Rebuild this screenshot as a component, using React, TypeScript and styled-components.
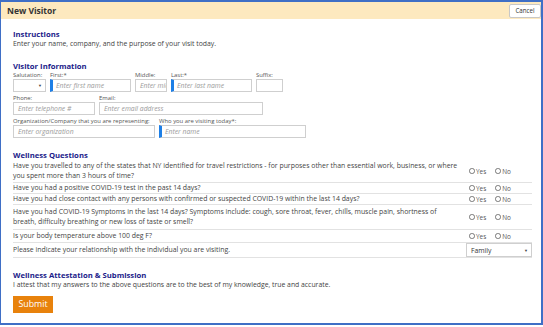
import React from "react"
import styled, { createGlobalStyle } from "styled-components"

const GlobalStyle = createGlobalStyle`
    html, body {
        margin: 0;
        padding: 0;
        background: #fff;
    }
    body {
        font-family: "Open Sans", "Noto Sans", sans-serif;
        color: #444;
    }
`

const Frame = styled.div`
    box-sizing: border-box;
    width: 543px;
    height: 325px;
    border: 2px solid #3f6fc6;
    border-left-width: 1.5px;
    display: flex;
    flex-direction: column;
`

const Header = styled.div`
    height: 17px;
    background: #fde9bf;
    display: flex;
    align-items: center;
    justify-content: space-between;
    padding: 0 0 0 6px;
`

const HeaderTitle = styled.div`
    font-size: 8.5px;
    font-weight: 700;
    color: #333;
`

const CancelButton = styled.button`
    box-sizing: border-box;
    height: 14px;
    width: 32px;
    padding: 0;
    background: #fff;
    border: 1px solid #c8c8c8;
    border-radius: 2px;
    font-family: inherit;
    font-size: 6.2px;
    color: #333;
`

const Body = styled.div`
    padding: 10px 8px 0 12px;
`

const Section = styled.div<{ $gap?: number }>`
    margin-bottom: ${(p) => p.$gap ?? 0}px;
`

const SectionTitle = styled.div`
    font-size: 7.7px;
    font-weight: 700;
    color: #1c1c8a;
    line-height: 10px;
`

const Text = styled.div`
    font-size: 6.85px;
    line-height: 10px;
    color: #444;
`

const FieldRow = styled.div`
    display: flex;
    gap: 4px;
    margin-bottom: 2px;
`

const Field = styled.div<{ $w: number }>`
    width: ${(p) => p.$w}px;
    display: flex;
    flex-direction: column;
`

const Label = styled.div`
    font-size: 5.9px;
    line-height: 8px;
    color: #555;
    white-space: nowrap;
`

const Input = styled.div<{ $required?: boolean }>`
    box-sizing: border-box;
    height: 13px;
    border: 1px solid #cfcfcf;
    border-left: ${(p) => (p.$required ? "3px solid #1e7fe6" : "1px solid #cfcfcf")};
    padding-left: ${(p) => (p.$required ? 3 : 4)}px;
    display: flex;
    align-items: center;
    font-size: 6.8px;
    font-style: italic;
    color: #9a9a9a;
    overflow: hidden;
    white-space: nowrap;
`

const SelectBox = styled.div<{ $h?: number }>`
    box-sizing: border-box;
    height: ${(p) => p.$h ?? 13}px;
    border: 1px solid #cfcfcf;
    display: flex;
    align-items: center;
    justify-content: space-between;
    padding: 0 3px 0 4px;
    font-size: 6.8px;
    color: #333;
`

const Caret = styled.span`
    font-size: 4px;
    color: #444;
`

const Questions = styled.div`
    width: 519px;
`

const QuestionRow = styled.div<{ $h: number }>`
    display: grid;
    grid-template-columns: 1fr 66px;
    align-items: center;
    min-height: ${(p) => p.$h}px;
    border-bottom: 1px solid #e2e2e2;
`

const QuestionText = styled.div`
    font-size: 6.9px;
    line-height: 10px;
    color: #444;
    padding-right: 7px;
`

const Radios = styled.div`
    display: flex;
    align-items: center;
    gap: 9px;
    padding-left: 3px;
    font-size: 6.4px;
    color: #555;
`

const RadioOption = styled.label`
    display: flex;
    align-items: center;
    gap: 1.5px;
`

const RadioCircle = styled.span`
    box-sizing: border-box;
    width: 5.5px;
    height: 5.5px;
    border-radius: 50%;
    border: 0.8px solid #777;
    display: inline-block;
`

const SubmitButton = styled.button`
    box-sizing: border-box;
    margin-top: 3px;
    width: 40px;
    height: 17px;
    padding: 0;
    border: none;
    background: #e8820c;
    color: #fff;
    font-family: inherit;
    font-size: 8.8px;
`

const YesNo: React.FC = () => (
    <Radios>
        <RadioOption>
            <RadioCircle />
            Yes
        </RadioOption>
        <RadioOption>
            <RadioCircle />
            No
        </RadioOption>
    </Radios>
)

const questions: { text: string; h: number }[] = [
    {
        text: "Have you travelled to any of the states that NY identified for travel restrictions - for purposes other than essential work, business, or where you spent more than 3 hours of time?",
        h: 22,
    },
    { text: "Have you had a positive COVID-19 test in the past 14 days?", h: 10 },
    {
        text: "Have you had close contact with any persons with confirmed or suspected COVID-19 within the last 14 days?",
        h: 10,
    },
    {
        text: "Have you had COVID-19 Symptoms in the last 14 days? Symptoms include: cough, sore throat, fever, chills, muscle pain, shortness of breath, difficulty breathing or new loss of taste or smell?",
        h: 24,
    },
    { text: "Is your body temperature above 100 deg F?", h: 12 },
]

export default function App() {
    return (
        <>
            <GlobalStyle />
            <Frame>
                <Header>
                    <HeaderTitle>New Visitor</HeaderTitle>
                    <CancelButton>Cancel</CancelButton>
                </Header>
                <Body>
                    <Section $gap={12}>
                        <SectionTitle>Instructions</SectionTitle>
                        <Text>Enter your name, company, and the purpose of your visit today.</Text>
                    </Section>
                    <Section $gap={12}>
                        <SectionTitle>Visitor Information</SectionTitle>
                        <FieldRow>
                            <Field $w={33}>
                                <Label>Salutation:</Label>
                                <SelectBox>
                                    <span />
                                    <Caret>▼</Caret>
                                </SelectBox>
                            </Field>
                            <Field $w={81}>
                                <Label>First:*</Label>
                                <Input $required>Enter first name</Input>
                            </Field>
                            <Field $w={32}>
                                <Label>Middle:</Label>
                                <Input>Enter middle</Input>
                            </Field>
                            <Field $w={81}>
                                <Label>Last:*</Label>
                                <Input $required>Enter last name</Input>
                            </Field>
                            <Field $w={27}>
                                <Label>Suffix:</Label>
                                <Input />
                            </Field>
                        </FieldRow>
                        <FieldRow>
                            <Field $w={82}>
                                <Label>Phone:</Label>
                                <Input>Enter telephone #</Input>
                            </Field>
                            <Field $w={164}>
                                <Label>Email:</Label>
                                <Input>Enter email address</Input>
                            </Field>
                        </FieldRow>
                        <FieldRow>
                            <Field $w={142}>
                                <Label>Organization/Company that you are representing:</Label>
                                <Input>Enter organization</Input>
                            </Field>
                            <Field $w={147}>
                                <Label>Who you are visiting today*:</Label>
                                <Input $required>Enter name</Input>
                            </Field>
                        </FieldRow>
                    </Section>
                    <Section $gap={12}>
                        <SectionTitle>Wellness Questions</SectionTitle>
                        <Questions>
                            {questions.map((q) => (
                                <QuestionRow key={q.text} $h={q.h}>
                                    <QuestionText>{q.text}</QuestionText>
                                    <YesNo />
                                </QuestionRow>
                            ))}
                            <QuestionRow $h={14}>
                                <QuestionText>
                                    Please indicate your relationship with the individual you are visiting.
                                </QuestionText>
                                <SelectBox $h={14}>
                                    Family
                                    <Caret>▼</Caret>
                                </SelectBox>
                            </QuestionRow>
                        </Questions>
                    </Section>
                    <Section>
                        <SectionTitle>Wellness Attestation &amp; Submission</SectionTitle>
                        <Text>
                            I attest that my answers to the above questions are to the best of my knowledge,
                            true and accurate.
                        </Text>
                        <SubmitButton>Submit</SubmitButton>
                    </Section>
                </Body>
            </Frame>
        </>
    )
}
